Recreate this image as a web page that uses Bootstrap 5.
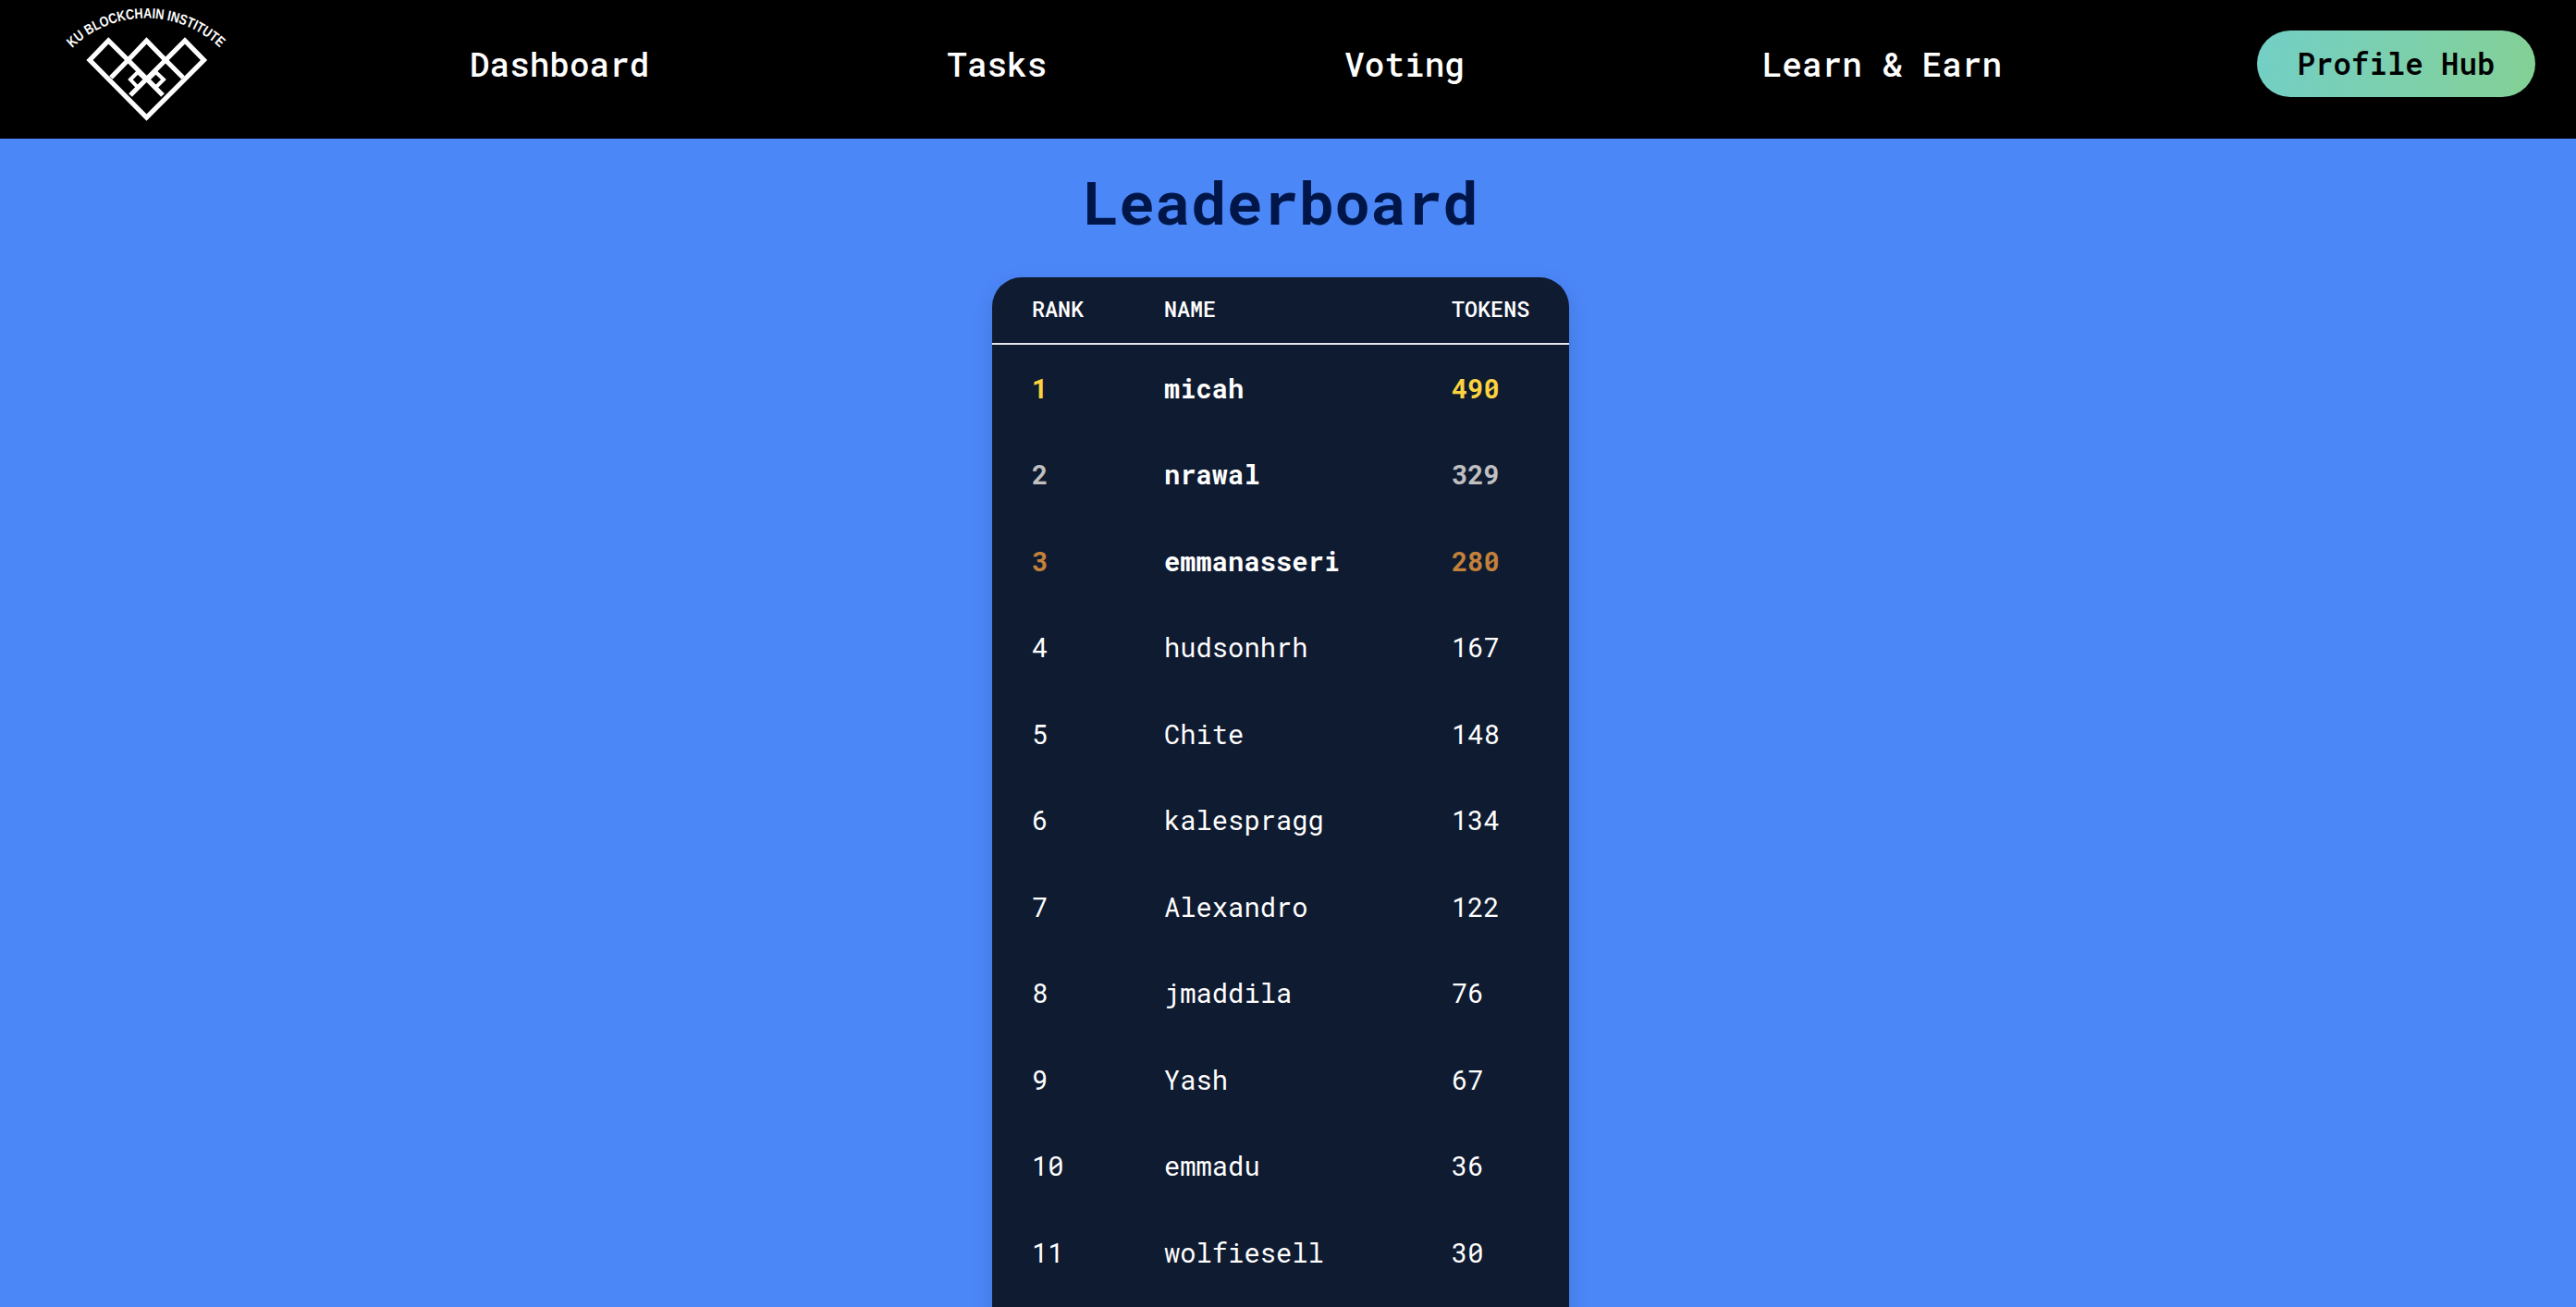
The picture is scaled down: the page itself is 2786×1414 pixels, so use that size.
<!doctype html>
<html lang="en"><head><meta charset="utf-8"><title>Leaderboard</title>
<link href="https://cdn.jsdelivr.net/npm/bootstrap@5.3.0/dist/css/bootstrap.min.css" rel="stylesheet">
<script src="https://cdn.jsdelivr.net/npm/bootstrap@5.3.0/dist/js/bootstrap.bundle.min.js"></script>
<style>
body{background:#4c87f8;font-family:"Roboto Mono","Liberation Mono",monospace}
.top-bar{height:150px;background:#000;padding:0 44px 12px}
.logo-box{width:303px}
.logo-svg{display:block}
.logo-text{font-family:"Liberation Sans",sans-serif;font-size:15.5px;font-weight:700;fill:#fff}
.main-link{color:#fff;font-size:36px;font-weight:500;text-decoration:none}
.hub-btn{margin-left:115px;width:301px;height:72px;font-size:32.4px;font-weight:600;color:#000;background:linear-gradient(100deg,#73cfc6,#84d095);border:0}
.board-title{font-size:64.8px;font-weight:700;color:#001648;line-height:72px;margin:32px 0 46px;text-align:center}
.main-area{padding-right:16px}
.board-card{width:624px;background:#0f1b31;border-radius:32px 32px 0 0;box-shadow:0 8px 24px rgba(0,0,0,.12);overflow:hidden}
.board-table{--bs-table-bg:transparent;--bs-table-color:#fff;table-layout:fixed;margin:0;width:624px}
.board-table th{font-size:23.4px;font-weight:500;height:72px;padding:0 0 3px;border-bottom:2px solid #e5e7eb;vertical-align:middle}
.board-table td{font-size:28.8px;font-weight:370;height:93.5px;padding:3px 0 0;border:0;vertical-align:middle}
.c1{width:186px;padding-left:43px!important}
.c2{width:311px}
.c3{width:127px}
.board-table .top-row td{font-weight:700}
.gold td.tint{color:#fbd33f}
.silver td.tint{color:#c0c0c0}
.bronze td.tint{color:#c4813a}
</style></head>
<body class="vh-100 overflow-hidden">
<nav class="top-bar d-flex align-items-center">
  <div class="logo-box">
    <svg class="logo-svg" width="210" height="138" viewBox="44 0 210 138" aria-label="KU Blockchain Institute">
      <defs><path id="arc" d="M76 54 A115 115 0 0 1 240 54"/></defs>
      <text class="logo-text"><textPath href="#arc" textLength="176" lengthAdjust="spacingAndGlyphs" startOffset="3">KU BLOCKCHAIN INSTITUTE</textPath></text>
      <g fill="none" stroke="#fff" stroke-width="5.2">
        <path d="M97 65 117.3 44 138.5 65 158.5 44 179 65 200 44 220.5 65 158.5 127Z"/>
        <path d="M138.5 65 176 103M179 65 141 103M138.5 65 120 84M179 65 198 84"/>
      </g>
      <g fill="none" stroke="#fff" stroke-width="4">
        <path d="M141 86 149 78 157.5 86 149 94.5Z"/>
        <path d="M160 86 168.5 78 177 86 168.5 94.5Z"/>
      </g>
    </svg>
  </div>
  <div class="flex-grow-1 d-flex justify-content-around">
    <a class="main-link" href="#">Dashboard</a>
    <a class="main-link" href="#">Tasks</a>
    <a class="main-link" href="#">Voting</a>
    <a class="main-link" href="#">Learn &amp; Earn</a>
  </div>
  <button class="btn rounded-pill hub-btn p-0">Profile Hub</button>
</nav>
<main class="main-area d-flex flex-column align-items-center">
  <h1 class="board-title">Leaderboard</h1>
  <div class="board-card">
    <table class="table board-table">
      <thead><tr><th class="c1">RANK</th><th class="c2">NAME</th><th class="c3">TOKENS</th></tr></thead>
      <tbody>
        <tr class="top-row gold"><td class="c1 tint">1</td><td>micah</td><td class="tint">490</td></tr>
        <tr class="top-row silver"><td class="c1 tint">2</td><td>nrawal</td><td class="tint">329</td></tr>
        <tr class="top-row bronze"><td class="c1 tint">3</td><td>emmanasseri</td><td class="tint">280</td></tr>
        <tr><td class="c1">4</td><td>hudsonhrh</td><td>167</td></tr>
        <tr><td class="c1">5</td><td>Chite</td><td>148</td></tr>
        <tr><td class="c1">6</td><td>kalespragg</td><td>134</td></tr>
        <tr><td class="c1">7</td><td>Alexandro</td><td>122</td></tr>
        <tr><td class="c1">8</td><td>jmaddila</td><td>76</td></tr>
        <tr><td class="c1">9</td><td>Yash</td><td>67</td></tr>
        <tr><td class="c1">10</td><td>emmadu</td><td>36</td></tr>
        <tr><td class="c1">11</td><td>wolfiesell</td><td>30</td></tr>
        <tr><td class="c1"></td><td></td><td></td></tr>
      </tbody>
    </table>
  </div>
</main>
</body></html>
